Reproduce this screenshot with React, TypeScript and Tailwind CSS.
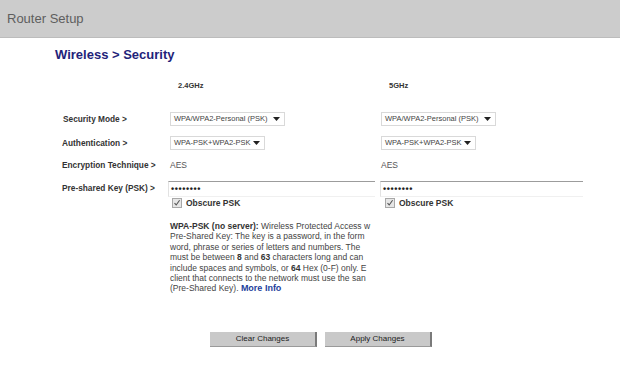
import React from "react";

const font = { fontFamily: '"Liberation Sans", Arial, sans-serif' };

function Select({ text, w }: { text: string; w: string }) {
  return (
    <div className={`flex h-[14px] ${w} items-center justify-between border border-[#d9d9d9] bg-white pl-[3px] pr-[4px]`}>
      <span className="whitespace-nowrap text-[7.5px] font-normal leading-none text-[#444]">{text}</span>
      <svg width="7" height="4" viewBox="0 0 7 4"><path d="M0 0 L7 0 L3.5 4 Z" fill="#222" /></svg>
    </div>
  );
}

function PskInput({ w }: { w: string }) {
  return (
    <div className={`flex h-[16px] ${w} items-center border-t border-l border-t-[#9c9c9c] border-l-[#e2e2e2] border-b border-b-[#f0f0f0] bg-white pl-[2px]`}>
      <span className="text-[9px] font-bold leading-none tracking-[0.6px] text-[#222]">••••••••</span>
    </div>
  );
}

function Obscure() {
  return (
    <div className="flex items-center gap-[4px]">
      <div className="flex h-[10px] w-[10px] items-center justify-center border border-[#a8a8a8] bg-[#e6e6e6]">
        <svg width="8" height="8" viewBox="0 0 8 8"><path d="M1.5 4.2 L3.2 6 L6.6 1.2" stroke="#555" strokeWidth="1.1" fill="none" /></svg>
      </div>
      <span className="text-[8.5px] font-bold leading-none text-[#333]">Obscure PSK</span>
    </div>
  );
}

export default function App() {
  return (
    <div style={font} className="h-[377px] w-[620px] overflow-hidden bg-white">
      <div className="flex h-[38px] items-center border-b border-[#bcbcbc] bg-[#cccccc] pl-[7px]">
        <span className="text-[13px] leading-none text-[#5e5e5e]">Router Setup</span>
      </div>

      <div className="mt-[9px] pl-[55px] text-[13px] font-bold leading-[16px] text-[#1f237a]">Wireless &gt; Security</div>

      <div className="mt-[18px] flex text-[7.5px] font-bold leading-[10px] text-[#333]">
        <div className="w-[178px]" />
        <div className="w-[211px]">2.4GHz</div>
        <div>5GHz</div>
      </div>

      <div className="mt-[21px] grid grid-cols-[108px_210px_1fr] items-center pl-[62px] text-[8.3px] font-bold leading-[10px] text-[#333]">
        <div className="pl-[1px]">Security Mode &gt;</div>
        <div><Select text="WPA/WPA2-Personal (PSK)" w="w-[115px]" /></div>
        <div className="pl-[1px]"><Select text="WPA/WPA2-Personal (PSK)" w="w-[115px]" /></div>
      </div>

      <div className="mt-[10px] grid grid-cols-[108px_210px_1fr] items-center pl-[62px] text-[8.3px] font-bold leading-[10px] text-[#333]">
        <div>Authentication &gt;</div>
        <div><Select text="WPA-PSK+WPA2-PSK" w="w-[95px]" /></div>
        <div className="pl-[1px]"><Select text="WPA-PSK+WPA2-PSK" w="w-[95px]" /></div>
      </div>

      <div className="mt-[8px] grid h-[14px] grid-cols-[108px_210px_1fr] items-center pl-[62px] text-[8.3px] leading-[10px] text-[#333]">
        <div className="font-bold">Encryption Technique &gt;</div>
        <div className="text-[8.5px] text-[#555]">AES</div>
        <div className="pl-[1px] text-[8.5px] text-[#555]">AES</div>
      </div>

      <div className="mt-[9px] grid grid-cols-[106px_212px_1fr] items-start pl-[62px] text-[8.3px] leading-[10px] text-[#333]">
        <div className="pt-[2px] font-bold">Pre-shared Key (PSK) &gt;</div>
        <div>
          <PskInput w="w-[207px]" />
          <div className="mt-[1px] pl-[4px]"><Obscure /></div>
          <div className="mt-[13px] w-[210px] overflow-hidden pl-[2px] text-[8.5px] leading-[10.4px] text-[#444]">
            <div className="whitespace-nowrap"><b className="text-[#333]">WPA-PSK (no server):</b> Wireless Protected Access w</div>
            <div className="whitespace-nowrap">Pre-Shared Key: The key is a password, in the form</div>
            <div className="whitespace-nowrap">word, phrase or series of letters and numbers. The</div>
            <div className="whitespace-nowrap">must be between <b className="text-[#333]">8</b> and <b className="text-[#333]">63</b> characters long and can</div>
            <div className="whitespace-nowrap">include spaces and symbols, or <b className="text-[#333]">64</b> Hex (0-F) only. E</div>
            <div className="whitespace-nowrap">client that connects to the network must use the san</div>
            <div className="whitespace-nowrap">(Pre-Shared Key). <b className="text-[9px] text-[#1d3e9c]">More Info</b></div>
          </div>
        </div>
        <div>
          <PskInput w="w-[203px]" />
          <div className="mt-[1px] pl-[5px]"><Obscure /></div>
        </div>
      </div>

      <div className="mt-[38px] flex gap-[8px] pl-[210px]">
        <button className="h-[15px] w-[107px] border-r-2 border-b border-r-[#7a7a7a] border-b-[#9a9a9a] bg-[#c9c9c9] text-[8px] leading-none text-[#222]">Clear Changes</button>
        <button className="h-[15px] w-[107px] border-r-2 border-b border-r-[#7a7a7a] border-b-[#9a9a9a] bg-[#c9c9c9] text-[8px] leading-none text-[#222]">Apply Changes</button>
      </div>
    </div>
  );
}
